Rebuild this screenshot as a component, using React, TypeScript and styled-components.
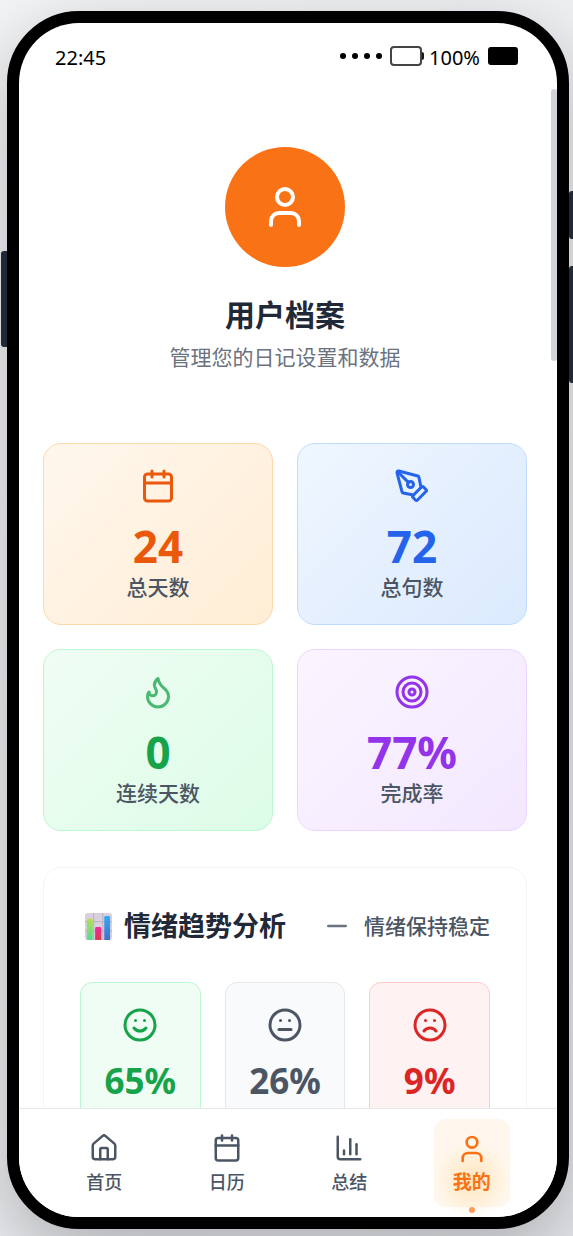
import React from "react";
import styled, { createGlobalStyle } from "styled-components";
import {
  Calendar,
  ChartColumn,
  Frown,
  House,
  Meh,
  Minus,
  PenTool,
  Smile,
  Target,
  User,
} from "lucide-react";

const GlobalStyle = createGlobalStyle`
  *, *::before, *::after { box-sizing: border-box; }
  body {
    margin: 0;
    font-family: "Noto Sans", "Noto Sans CJK SC", sans-serif;
    color: #1f2937;
  }
  h1, h2, p { margin: 0; }
`;

const Page = styled.div`
  height: 100vh;
  padding: 11px 4px 7px 7px;
  overflow: hidden;
  background: linear-gradient(135deg, #f3f4f6, #e5e7eb);
`;

const Phone = styled.div`
  position: relative;
  height: 100%;
  border: 12px solid #000;
  border-radius: 72px;
  background: #000;
  box-shadow: 0 24px 72px rgba(0, 0, 0, 0.25);
`;

const SideButton = styled.span<{ $side: "left" | "right"; $top: number; $height: number }>`
  position: absolute;
  ${(p) => p.$side}: -18px;
  top: ${(p) => p.$top}px;
  width: 6px;
  height: ${(p) => p.$height}px;
  border-radius: ${(p) => (p.$side === "left" ? "3px 0 0 3px" : "3px")};
  background: #1f2937;
`;

const Screen = styled.div`
  display: flex;
  flex-direction: column;
  height: 100%;
  overflow: hidden;
  border-radius: 60px;
  background: #fff;
`;

const StatusBar = styled.header`
  display: flex;
  flex: none;
  align-items: center;
  justify-content: space-between;
  height: 66px;
  padding: 0 39px 0 36px;
  color: #000;
  font-size: 20px;
  font-weight: 400;
  line-height: 28px;
`;

const StatusText = styled.span`
  padding-top: 4px;
`;

const StatusIcons = styled.div`
  display: flex;
  align-items: center;
`;

const Signal = styled.div`
  display: flex;
  gap: 6px;
  margin-right: 8px;
`;

const SignalDot = styled.span`
  width: 6px;
  height: 6px;
  border-radius: 50%;
  background: #000;
`;

const Battery = styled.span`
  width: 32px;
  height: 20px;
  border: 2px solid #444;
  border-radius: 4px;
`;

const BatteryTip = styled.span`
  width: 2px;
  height: 8px;
  margin-right: 5px;
  border-radius: 0 2px 2px 0;
  background: #1a1a1a;
`;

const BatteryFill = styled.span`
  width: 30px;
  height: 18px;
  margin-left: 8px;
  border-radius: 3px;
  background: #000;
`;

const Viewport = styled.div`
  display: flex;
  flex: 1;
  min-height: 0;
`;

const Content = styled.main`
  flex: 1;
  min-width: 0;
  padding: 0 24px 24px;
  overflow-y: auto;
  scrollbar-width: none;
`;

const ScrollThumb = styled.div`
  flex: none;
  width: 6px;
  height: 272px;
  border-radius: 3px;
  background: #d1d5db;
`;

const Profile = styled.section`
  display: flex;
  flex-direction: column;
  align-items: center;
  padding: 58px 0 68px;
`;

const Avatar = styled.div`
  display: grid;
  place-items: center;
  width: 120px;
  height: 120px;
  margin-bottom: 24px;
  border-radius: 50%;
  background: #f97316;
  color: #fff;
`;

const ProfileTitle = styled.h1`
  font-size: 30px;
  font-weight: 700;
  line-height: 48px;
`;

const ProfileNote = styled.p`
  color: #6b7280;
  font-size: 21px;
  line-height: 36px;
`;

const StatGrid = styled.section`
  display: grid;
  grid-template-columns: 1fr 1fr;
  gap: 24px;
  margin-bottom: 36px;
`;

const StatCard = styled.div<{ $from: string; $to: string; $line: string; $ink: string }>`
  display: flex;
  flex-direction: column;
  align-items: center;
  height: 182px;
  padding-top: 24px;
  border: 1px solid ${(p) => p.$line};
  border-radius: 18px;
  background: linear-gradient(135deg, ${(p) => p.$from}, ${(p) => p.$to});
  color: ${(p) => p.$ink};
`;

const StatValue = styled.strong`
  margin-top: 16px;
  font-size: 44px;
  font-weight: 700;
  line-height: 52px;
`;

const StatLabel = styled.span`
  color: #4b5563;
  font-size: 21px;
  font-weight: 500;
  line-height: 30px;
`;

const Panel = styled.section`
  padding: 36px;
  border: 1px solid #f3f4f6;
  border-radius: 18px;
`;

const PanelHead = styled.div`
  display: flex;
  align-items: center;
  justify-content: space-between;
  padding-top: 1px;
  margin-bottom: 35px;
`;

const PanelTitle = styled.h2`
  display: flex;
  align-items: center;
  gap: 12px;
  padding-left: 5px;
  font-size: 27px;
  font-weight: 700;
  line-height: 42px;
`;

const Trend = styled.div`
  display: flex;
  align-items: center;
  gap: 12px;
  color: #4b5563;
  font-size: 21px;
  font-weight: 500;
  line-height: 42px;

  svg { color: #6b7280; }
`;

const MoodGrid = styled.div`
  display: grid;
  grid-template-columns: repeat(3, 1fr);
  gap: 24px;
`;

const MoodCard = styled.div<{ $fill: string; $line: string; $ink: string }>`
  display: flex;
  flex-direction: column;
  align-items: center;
  padding: 24px 0 60px;
  border: 1px solid ${(p) => p.$line};
  border-radius: 12px;
  background: ${(p) => p.$fill};
  color: ${(p) => p.$ink};
`;

const MoodValue = styled.strong`
  margin-top: 12px;
  font-size: 35px;
  font-weight: 700;
  line-height: 52px;
`;

const TabBar = styled.nav`
  display: grid;
  flex: none;
  grid-template-columns: repeat(4, 1fr);
  justify-items: center;
  padding: 10px 24px;
  border-top: 1px solid #e5e7eb;
  background: #fff;
`;

const Tab = styled.button<{ $active: boolean }>`
  position: relative;
  display: flex;
  flex-direction: column;
  align-items: center;
  width: 76px;
  height: 88px;
  padding: 14px 0 0;
  border: 0;
  border-radius: 12px;
  background: ${(p) => (p.$active ? "#fff7ed" : "transparent")};
  color: ${(p) => (p.$active ? "#f97316" : "#4b5563")};
  font-family: inherit;
  font-size: ${(p) => (p.$active ? 19 : 18)}px;
  font-weight: ${(p) => (p.$active ? 600 : 500)};
  line-height: 24px;
  cursor: pointer;
`;

const TabGlow = styled.span`
  position: absolute;
  top: 16px;
  left: -7px;
  width: 90px;
  height: 90px;
  background: radial-gradient(circle, rgba(254, 215, 150, 0.55), rgba(254, 215, 170, 0) 60%);
`;

const TabDot = styled.span`
  position: absolute;
  bottom: -6px;
  left: 35px;
  width: 6px;
  height: 6px;
  border-radius: 50%;
  background: #fb9a5a;
`;

const TabIcon = styled.span`
  position: relative;
  display: grid;
  place-items: center;
  height: 30px;
  margin-bottom: 7px;
`;

const TabLabel = styled.span`
  position: relative;
`;

function Flame({ size }: { size: number }) {
  return (
    <svg
      width={size}
      height={size}
      viewBox="0 0 24 24"
      fill="none"
      stroke="currentColor"
      strokeWidth="2"
      strokeLinecap="round"
      strokeLinejoin="round"
      opacity="0.75"
    >
      <path d="M8.5 14.5A2.5 2.5 0 0 0 11 12c0-1.38-.5-2-1-3-1.072-2.143-.224-4.054 2-6 .5 2.5 2 4.9 4 6.5 2 1.6 3 3.5 3 5.5a7 7 0 1 1-14 0c0-1.153.433-2.294 1-3a2.5 2.5 0 0 0 2.5 2.5z" />
    </svg>
  );
}

function ChartEmoji() {
  return (
    <svg width="27" height="27" viewBox="0 0 28 28" aria-hidden="true">
      <defs>
        <linearGradient id="bar-green" x1="0" y1="0" x2="0" y2="1">
          <stop offset="0" stopColor="#b5e04c" />
          <stop offset="1" stopColor="#54dd90" />
        </linearGradient>
        <linearGradient id="bar-pink" x1="0" y1="0" x2="0" y2="1">
          <stop offset="0" stopColor="#ee2c9a" />
          <stop offset="1" stopColor="#e0394f" />
        </linearGradient>
        <linearGradient id="bar-blue" x1="0" y1="0" x2="0" y2="1">
          <stop offset="0" stopColor="#34a9f5" />
          <stop offset="1" stopColor="#4270c8" />
        </linearGradient>
      </defs>
      <rect width="28" height="28" rx="3" fill="#d8d0df" />
      <path
        d="M9 0v28M18.500 0v28M0 9h28M0 18.500h28"
        stroke="#b9afc2"
        strokeWidth="1"
        fill="none"
      />
      <path d="M2 28V7.500A1.500 1.500 0 0 1 3.500 6h3A1.500 1.500 0 0 1 8 7.500V28z" fill="url(#bar-green)" />
      <path d="M10.500 28V16a1.500 1.500 0 0 1 1.500-1.500h3.500a1.500 1.500 0 0 1 1.500 1.500v12z" fill="url(#bar-pink)" />
      <path d="M20 28V4.500A1.500 1.500 0 0 1 21.500 3h3A1.500 1.500 0 0 1 26 4.500V28z" fill="url(#bar-blue)" />
    </svg>
  );
}

const stats = [
  { label: "总天数", value: "24", icon: <Calendar size={36} />, from: "#fff7ed", to: "#ffedd5", line: "#fed7aa", ink: "#ea580c" },
  { label: "总句数", value: "72", icon: <PenTool size={36} />, from: "#eff6ff", to: "#dbeafe", line: "#bfdbfe", ink: "#2563eb" },
  { label: "连续天数", value: "0", icon: <Flame size={36} />, from: "#f0fdf4", to: "#dcfce7", line: "#bbf7d0", ink: "#16a34a" },
  { label: "完成率", value: "77%", icon: <Target size={36} />, from: "#faf5ff", to: "#f3e8ff", line: "#e9d5ff", ink: "#9333ea" },
];

const moods = [
  { value: "65%", icon: <Smile size={36} />, fill: "#f0fdf4", line: "#bbf7d0", ink: "#16a34a" },
  { value: "26%", icon: <Meh size={36} />, fill: "#f9fafb", line: "#e5e7eb", ink: "#4b5563" },
  { value: "9%", icon: <Frown size={36} />, fill: "#fef2f2", line: "#fecaca", ink: "#dc2626" },
];

const tabs = [
  { label: "首页", icon: <House size={30} />, active: false },
  { label: "日历", icon: <Calendar size={30} />, active: false },
  { label: "总结", icon: <ChartColumn size={30} />, active: false },
  { label: "我的", icon: <User size={32} />, active: true },
];

export default function App() {
  return (
    <Page>
      <GlobalStyle />
      <Phone>
        <SideButton $side="left" $top={228} $height={96} />
        <SideButton $side="right" $top={168} $height={48} />
        <SideButton $side="right" $top={243} $height={117} />
        <Screen>
          <StatusBar>
            <StatusText>22:45</StatusText>
            <StatusIcons>
              <Signal>
                <SignalDot />
                <SignalDot />
                <SignalDot />
                <SignalDot />
              </Signal>
              <Battery />
              <BatteryTip />
              <StatusText>100%</StatusText>
              <BatteryFill />
            </StatusIcons>
          </StatusBar>

          <Viewport>
            <Content>
              <Profile>
                <Avatar>
                  <User size={48} />
                </Avatar>
                <ProfileTitle>用户档案</ProfileTitle>
                <ProfileNote>管理您的日记设置和数据</ProfileNote>
              </Profile>

              <StatGrid>
                {stats.map((s) => (
                  <StatCard key={s.label} $from={s.from} $to={s.to} $line={s.line} $ink={s.ink}>
                    {s.icon}
                    <StatValue>{s.value}</StatValue>
                    <StatLabel>{s.label}</StatLabel>
                  </StatCard>
                ))}
              </StatGrid>

              <Panel>
                <PanelHead>
                  <PanelTitle>
                    <ChartEmoji />
                    情绪趋势分析
                  </PanelTitle>
                  <Trend>
                    <Minus size={30} />
                    情绪保持稳定
                  </Trend>
                </PanelHead>
                <MoodGrid>
                  {moods.map((m) => (
                    <MoodCard key={m.value} $fill={m.fill} $line={m.line} $ink={m.ink}>
                      {m.icon}
                      <MoodValue>{m.value}</MoodValue>
                    </MoodCard>
                  ))}
                </MoodGrid>
              </Panel>
            </Content>
            <ScrollThumb />
          </Viewport>

          <TabBar>
            {tabs.map((t) => (
              <Tab key={t.label} type="button" $active={t.active}>
                {t.active && <TabGlow />}
                <TabIcon>{t.icon}</TabIcon>
                <TabLabel>{t.label}</TabLabel>
                {t.active && <TabDot />}
              </Tab>
            ))}
          </TabBar>
        </Screen>
      </Phone>
    </Page>
  );
}
